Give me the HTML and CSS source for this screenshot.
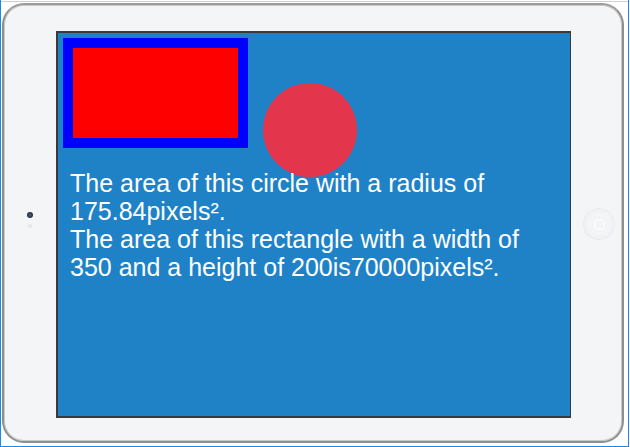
FILE: index.html
```html
<!DOCTYPE html>
<html lang="en">
<head>
<meta charset="utf-8">
<title>Areas</title>
<link rel="stylesheet" href="styles.css">
</head>
<body>
<div class="page">
  <div class="device">
    <div class="bezel bezel-left">
      <span class="camera"></span>
      <span class="sensor"></span>
    </div>
    <div class="screen">
      <div class="shapes">
        <div class="rect"></div>
        <div class="circle"></div>
      </div>
      <p class="info">The area of this circle with a radius of 175.84pixels².<br>The area of this rectangle with a width of 350 and a height of 200is70000pixels².</p>
    </div>
    <div class="bezel bezel-right">
      <span class="home"><span class="home-square"></span></span>
    </div>
  </div>
</div>
</body>
</html>
```

FILE: styles.css
```css
* { box-sizing: border-box; }
html, body { margin: 0; padding: 0; background: #ffffff; }
.page {
  width: 629px;
  height: 447px;
  padding: 3px 4px 3px 1px;
  border-left: 1px solid #1e88e5;
  border-right: 1px solid #1e88e5;
  border-bottom: 1px solid #1e88e5;
  background: linear-gradient(#ffffff 0 1px, #cfcfcf 1px 2px, #ffffff 2px);
}
.device {
  width: 622px;
  height: 440px;
  display: grid;
  grid-template-columns: 52px 1fr 51px;
  padding: 26px 0 23px;
  background: #f4f5f7;
  border: 2px solid #8f8f8f;
  border-top-color: #9c9c9c;
  border-radius: 22px;
  box-shadow: inset 0 0 0 1px #c9c9c9;
}
.bezel {
  display: flex;
  flex-direction: column;
  align-items: center;
  justify-content: center;
}
.bezel-left { padding-bottom: 10px; }
.camera {
  width: 6px;
  height: 6px;
  border-radius: 50%;
  background: radial-gradient(circle, #2a5d8f 0 1px, #2d3440 2px);
}
.sensor {
  width: 4px;
  height: 4px;
  margin-top: 6px;
  border-radius: 50%;
  background: #e4e6ea;
}
.bezel-right { padding-left: 5px; padding-bottom: 1px; }
.home {
  width: 30px;
  height: 30px;
  border-radius: 50%;
  background: radial-gradient(circle, #f4f5f7 0 50%, #e8e9ed 100%);
  box-shadow: 0 0 0 1px #e9ebee;
  display: flex;
  align-items: center;
  justify-content: center;
}
.home-square {
  width: 11px;
  height: 11px;
  border: 1px solid #ffffff;
  border-radius: 3px;
  box-shadow: 0 0 1px #d5d8dd;
}
.screen {
  background: #1f82c7;
  border: 2px solid #3a3a3a;
  border-right-width: 1px;
  border-bottom-width: 2px;
  padding: 5px;
  overflow: hidden;
}
.shapes {
  display: flex;
  align-items: flex-start;
  height: 110px;
}
.rect {
  width: 185px;
  height: 110px;
  border: 10px solid #0000ff;
  background: #ff0000;
  flex: none;
}
.circle {
  flex: none;
  width: 94px;
  height: 94px;
  margin: 45px 0 0 15px;
  border-radius: 50%;
  background: #e3354c;
}
.info {
  margin: 21px 0 0 7px;
  width: 470px;
  font-family: "Liberation Sans", Arial, sans-serif;
  font-size: 25px;
  line-height: 28px;
  color: #ffffff;
}
```
